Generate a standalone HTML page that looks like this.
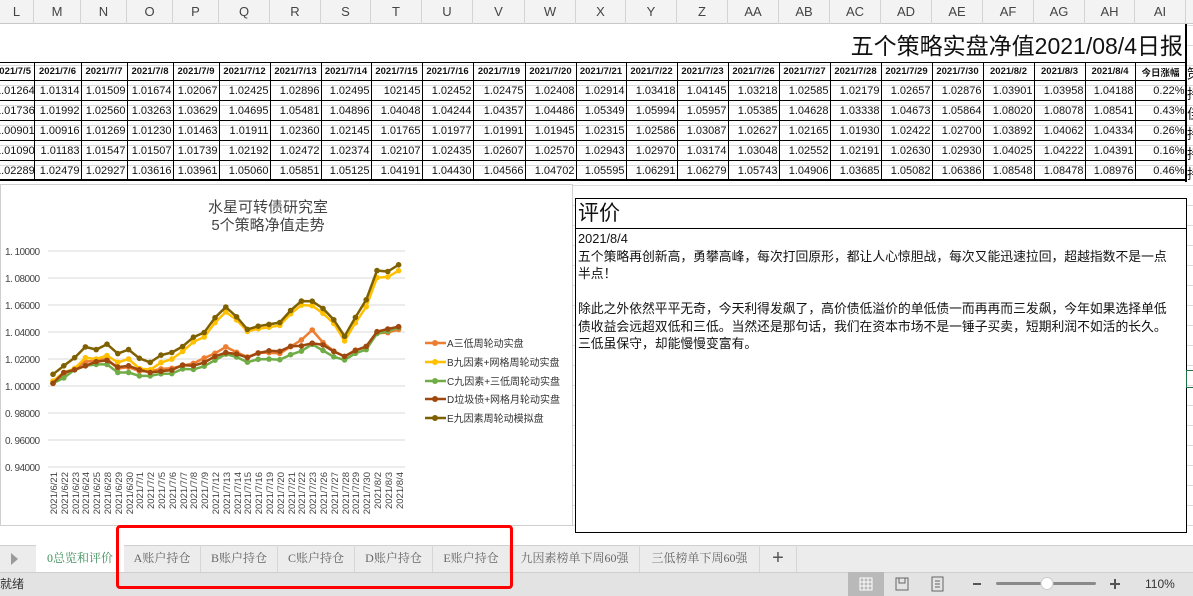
<!DOCTYPE html>
<html><head><meta charset="utf-8">
<style>
*{margin:0;padding:0;box-sizing:border-box}
body{width:1193px;height:596px;overflow:hidden;background:#fff;font-family:"Liberation Sans","Noto Sans CJK SC",sans-serif;position:relative}
.abs{position:absolute}
#hdr{left:0;top:0;width:1193px;height:24px;background:#f3f3f3;border-bottom:1px solid #c8c8c8}
#hdr div{position:absolute;top:0;height:24px;line-height:24px;text-align:center;font-size:13px;color:#444;border-right:1px solid #d4d4d4}
table{border-collapse:collapse;table-layout:fixed;position:absolute;left:0;top:62px;width:1186px}
td{border:1px solid #000;height:20px;font-size:11px;text-align:right;padding:0 1px;overflow:hidden;white-space:nowrap;color:#111}
tr.d td{font-weight:bold;font-size:9.5px;text-align:center;height:18px}
td:first-child{text-align:left!important;padding:0;text-indent:-5px;border-left:none}
tr.d td:first-child{text-indent:-6px}
#grid{left:0;top:24px;width:1193px;height:521px;background-image:linear-gradient(#dcdcdc 1px,transparent 1px);background-size:100% 20px;background-position:0 1px}
</style></head><body>
<div class="abs" id="grid"></div>
<div class="abs" style="left:0;top:24px;width:1186px;height:38px;background:#fff"></div>
<div class="abs" id="hdr">
<div style="left:0;width:34px">L</div><div style="left:34px;width:47px">M</div><div style="left:81px;width:46px">N</div><div style="left:127px;width:46px">O</div><div style="left:173px;width:46px">P</div><div style="left:219px;width:51px">Q</div><div style="left:270px;width:51px">R</div><div style="left:321px;width:50px">S</div><div style="left:371px;width:51px">T</div><div style="left:422px;width:51px">U</div><div style="left:473px;width:52px">V</div><div style="left:525px;width:51px">W</div><div style="left:576px;width:50px">X</div><div style="left:626px;width:51px">Y</div><div style="left:677px;width:51px">Z</div><div style="left:728px;width:51px">AA</div><div style="left:779px;width:51px">AB</div><div style="left:830px;width:51px">AC</div><div style="left:881px;width:51px">AD</div><div style="left:932px;width:51px">AE</div><div style="left:983px;width:51px">AF</div><div style="left:1034px;width:51px">AG</div><div style="left:1085px;width:50px">AH</div><div style="left:1135px;width:51px">AI</div>
</div>
<div class="abs" style="left:600px;top:29px;width:583px;text-align:right;font-size:23px;line-height:34px;color:#111">五个策略实盘净值2021/08/4日报</div>
<div class="abs" style="left:1185px;top:24px;width:2px;height:158px;background:#000"></div>
<div class="abs" style="left:1187px;top:64px;font-size:14px;line-height:20px;color:#111">策<br>持<br>佳<br>持<br>持<br>持</div>
<table>
<colgroup><col style="width:34px"><col style="width:47px"><col style="width:46px"><col style="width:46px"><col style="width:46px"><col style="width:51px"><col style="width:51px"><col style="width:50px"><col style="width:51px"><col style="width:51px"><col style="width:52px"><col style="width:51px"><col style="width:50px"><col style="width:51px"><col style="width:51px"><col style="width:51px"><col style="width:51px"><col style="width:51px"><col style="width:51px"><col style="width:51px"><col style="width:51px"><col style="width:51px"><col style="width:50px"><col style="width:51px"></colgroup>
<tr class="d"><td>2021/7/5</td><td>2021/7/6</td><td>2021/7/7</td><td>2021/7/8</td><td>2021/7/9</td><td>2021/7/12</td><td>2021/7/13</td><td>2021/7/14</td><td>2021/7/15</td><td>2021/7/16</td><td>2021/7/19</td><td>2021/7/20</td><td>2021/7/21</td><td>2021/7/22</td><td>2021/7/23</td><td>2021/7/26</td><td>2021/7/27</td><td>2021/7/28</td><td>2021/7/29</td><td>2021/7/30</td><td>2021/8/2</td><td>2021/8/3</td><td>2021/8/4</td><td>今日涨幅</td></tr>
<tr><td>1.01264</td><td>1.01314</td><td>1.01509</td><td>1.01674</td><td>1.02067</td><td>1.02425</td><td>1.02896</td><td>1.02495</td><td>102145</td><td>1.02452</td><td>1.02475</td><td>1.02408</td><td>1.02914</td><td>1.03418</td><td>1.04145</td><td>1.03218</td><td>1.02585</td><td>1.02179</td><td>1.02657</td><td>1.02876</td><td>1.03901</td><td>1.03958</td><td>1.04188</td><td>0.22%</td></tr>
<tr><td>1.01736</td><td>1.01992</td><td>1.02560</td><td>1.03263</td><td>1.03629</td><td>1.04695</td><td>1.05481</td><td>1.04896</td><td>1.04048</td><td>1.04244</td><td>1.04357</td><td>1.04486</td><td>1.05349</td><td>1.05994</td><td>1.05957</td><td>1.05385</td><td>1.04628</td><td>1.03338</td><td>1.04673</td><td>1.05864</td><td>1.08020</td><td>1.08078</td><td>1.08541</td><td>0.43%</td></tr>
<tr><td>1.00901</td><td>1.00916</td><td>1.01269</td><td>1.01230</td><td>1.01463</td><td>1.01911</td><td>1.02360</td><td>1.02145</td><td>1.01765</td><td>1.01977</td><td>1.01991</td><td>1.01945</td><td>1.02315</td><td>1.02586</td><td>1.03087</td><td>1.02627</td><td>1.02165</td><td>1.01930</td><td>1.02422</td><td>1.02700</td><td>1.03892</td><td>1.04062</td><td>1.04334</td><td>0.26%</td></tr>
<tr><td>1.01090</td><td>1.01183</td><td>1.01547</td><td>1.01507</td><td>1.01739</td><td>1.02192</td><td>1.02472</td><td>1.02374</td><td>1.02107</td><td>1.02435</td><td>1.02607</td><td>1.02570</td><td>1.02943</td><td>1.02970</td><td>1.03174</td><td>1.03048</td><td>1.02552</td><td>1.02191</td><td>1.02630</td><td>1.02930</td><td>1.04025</td><td>1.04222</td><td>1.04391</td><td>0.16%</td></tr>
<tr><td>1.02289</td><td>1.02479</td><td>1.02927</td><td>1.03616</td><td>1.03961</td><td>1.05060</td><td>1.05851</td><td>1.05125</td><td>1.04191</td><td>1.04430</td><td>1.04566</td><td>1.04702</td><td>1.05595</td><td>1.06291</td><td>1.06279</td><td>1.05743</td><td>1.04906</td><td>1.03685</td><td>1.05082</td><td>1.06386</td><td>1.08548</td><td>1.08478</td><td>1.08976</td><td>0.46%</td></tr>
</table>
<div class="abs" style="left:0;top:179px;width:1186px;height:2px;background:#000"></div>

<div class="abs" style="left:0;top:184px;width:573px;height:342px;background:#fff;border:1px solid #cfcfcf"></div>
<svg class="abs" style="left:0;top:0" width="1193" height="596">
<g font-family="Liberation Sans,Noto Sans CJK SC,sans-serif">
<text x="268" y="212" font-size="15" fill="#444" text-anchor="middle">水星可转债研究室</text>
<text x="268" y="230" font-size="15" fill="#444" text-anchor="middle">5个策略净值走势</text>
<g font-size="10" fill="#444">
<text x="5" y="255" textLength="35">1. 10000</text><text x="5" y="282" textLength="35">1. 08000</text><text x="5" y="309" textLength="35">1. 06000</text><text x="5" y="336" textLength="35">1. 04000</text><text x="5" y="363" textLength="35">1. 02000</text><text x="5" y="390" textLength="35">1. 00000</text><text x="5" y="417" textLength="35">0. 98000</text><text x="5" y="444" textLength="35">0. 96000</text><text x="5" y="471" textLength="35">0. 94000</text>
</g>
<g stroke="#d9d9d9" stroke-width="1">
<line x1="48" x2="405" y1="251" y2="251"/><line x1="48" x2="405" y1="278" y2="278"/><line x1="48" x2="405" y1="305" y2="305"/><line x1="48" x2="405" y1="332" y2="332"/><line x1="48" x2="405" y1="359" y2="359"/><line x1="48" x2="405" y1="386" y2="386"/><line x1="48" x2="405" y1="413" y2="413"/><line x1="48" x2="405" y1="440" y2="440"/><line x1="48" x2="405" y1="467" y2="467"/>
</g>
<g font-size="9.5" fill="#444" text-anchor="end">
<text transform="translate(57,472) rotate(-90)">2021/6/21</text><text transform="translate(68,472) rotate(-90)">2021/6/22</text><text transform="translate(79,472) rotate(-90)">2021/6/23</text><text transform="translate(89,472) rotate(-90)">2021/6/24</text><text transform="translate(100,472) rotate(-90)">2021/6/25</text><text transform="translate(111,472) rotate(-90)">2021/6/28</text><text transform="translate(122,472) rotate(-90)">2021/6/29</text><text transform="translate(133,472) rotate(-90)">2021/6/30</text><text transform="translate(143,472) rotate(-90)">2021/7/1</text><text transform="translate(154,472) rotate(-90)">2021/7/2</text><text transform="translate(165,472) rotate(-90)">2021/7/5</text><text transform="translate(176,472) rotate(-90)">2021/7/6</text><text transform="translate(187,472) rotate(-90)">2021/7/7</text><text transform="translate(197,472) rotate(-90)">2021/7/8</text><text transform="translate(208,472) rotate(-90)">2021/7/9</text><text transform="translate(219,472) rotate(-90)">2021/7/12</text><text transform="translate(230,472) rotate(-90)">2021/7/13</text><text transform="translate(241,472) rotate(-90)">2021/7/14</text><text transform="translate(251,472) rotate(-90)">2021/7/15</text><text transform="translate(262,472) rotate(-90)">2021/7/16</text><text transform="translate(273,472) rotate(-90)">2021/7/19</text><text transform="translate(284,472) rotate(-90)">2021/7/20</text><text transform="translate(295,472) rotate(-90)">2021/7/21</text><text transform="translate(305,472) rotate(-90)">2021/7/22</text><text transform="translate(316,472) rotate(-90)">2021/7/23</text><text transform="translate(327,472) rotate(-90)">2021/7/26</text><text transform="translate(338,472) rotate(-90)">2021/7/27</text><text transform="translate(349,472) rotate(-90)">2021/7/28</text><text transform="translate(359,472) rotate(-90)">2021/7/29</text><text transform="translate(370,472) rotate(-90)">2021/7/30</text><text transform="translate(381,472) rotate(-90)">2021/8/2</text><text transform="translate(392,472) rotate(-90)">2021/8/3</text><text transform="translate(403,472) rotate(-90)">2021/8/4</text>
</g>
<g id="series"></g>
<g font-size="10" fill="#333">
<line x1="425" x2="446" y1="343" y2="343" stroke="#ed7d31" stroke-width="2.5"/><circle cx="435" cy="343" r="3" fill="#ed7d31"/><text x="447" y="347">A三低周轮动实盘</text>
<line x1="425" x2="446" y1="362" y2="362" stroke="#ffc000" stroke-width="2.5"/><circle cx="435" cy="362" r="3" fill="#ffc000"/><text x="447" y="366">B九因素+网格周轮动实盘</text>
<line x1="425" x2="446" y1="381" y2="381" stroke="#70ad47" stroke-width="2.5"/><circle cx="435" cy="381" r="3" fill="#70ad47"/><text x="447" y="385">C九因素+三低周轮动实盘</text>
<line x1="425" x2="446" y1="399" y2="399" stroke="#9e480e" stroke-width="2.5"/><circle cx="435" cy="399" r="3" fill="#9e480e"/><text x="447" y="403">D垃圾债+网格月轮动实盘</text>
<line x1="425" x2="446" y1="418" y2="418" stroke="#7f6000" stroke-width="2.5"/><circle cx="435" cy="418" r="3" fill="#7f6000"/><text x="447" y="422">E九因素周轮动模拟盘</text>
</g>
</g>
</svg>

<div class="abs" style="left:575px;top:198px;width:612px;height:335px;background:#fff;border:1px solid #000"></div>
<div class="abs" style="left:575px;top:228px;width:612px;height:1px;background:#000"></div>
<div class="abs" style="left:578px;top:199px;font-size:21px;line-height:29px;color:#111">评价</div>
<div class="abs" style="left:578px;top:230px;width:610px;font-size:12.8px;line-height:17.5px;color:#111;white-space:nowrap">2021/8/4<br>五个策略再创新高，勇攀高峰，每次打回原形，都让人心惊胆战，每次又能迅速拉回，超越指数不是一点<br>半点！<br><br>除此之外依然平平无奇，今天利得发飙了，高价债低溢价的单低债一而再再而三发飙，今年如果选择单低<br>债收益会远超双低和三低。当然还是那句话，我们在资本市场不是一锤子买卖，短期利润不如活的长久。<br>三低虽保守，却能慢慢变富有。</div>
<div class="abs" style="left:1186px;top:370px;width:7px;height:18px;border:1px solid #1e7145;border-right:none"></div>

<div class="abs" style="left:0;top:545px;width:1193px;height:27px;background:#ececec;border-top:1px solid #d0d0d0"></div>
<div class="abs" style="left:11px;top:553px;width:0;height:0;border-left:7px solid #9a9a9a;border-top:6px solid transparent;border-bottom:6px solid transparent"></div>
<div class="abs" style="left:36px;top:545px;width:88px;height:27px;background:#fff;color:#3f8f5a;font-size:12px;line-height:27px;text-align:center;font-family:'Liberation Serif','Noto Serif CJK SC',serif">0总览和评价</div>
<div class="abs" style="top:545px;left:0;font-size:12px;line-height:27px;color:#666;font-family:'Liberation Serif','Noto Serif CJK SC',serif">
<span class="abs" style="left:124px;width:77px;text-align:center;border-right:1px solid #d6d6d6">A账户持仓</span>
<span class="abs" style="left:201px;width:77px;text-align:center;border-right:1px solid #d6d6d6">B账户持仓</span>
<span class="abs" style="left:278px;width:77px;text-align:center;border-right:1px solid #d6d6d6">C账户持仓</span>
<span class="abs" style="left:355px;width:78px;text-align:center;border-right:1px solid #d6d6d6">D账户持仓</span>
<span class="abs" style="left:433px;width:77px;text-align:center;border-right:1px solid #d6d6d6">E账户持仓</span>
<span class="abs" style="left:510px;width:130px;text-align:center;border-right:1px solid #d6d6d6">九因素榜单下周60强</span>
<span class="abs" style="left:640px;width:120px;text-align:center;border-right:1px solid #d6d6d6">三低榜单下周60强</span>
<span class="abs" style="left:760px;width:37px;text-align:center;border-right:1px solid #d6d6d6;font-size:20px;color:#555;font-family:'Liberation Sans',sans-serif">+</span>
</div>
<div class="abs" style="left:0;top:572px;width:1193px;height:24px;background:#e3e3e3;border-top:1px solid #cfcfcf"></div>
<div class="abs" style="left:0;top:572px;font-size:12px;line-height:24px;color:#333">就绪</div>
<div class="abs" style="left:848px;top:572px;width:36px;height:24px;background:#b9b9b9"></div>
<svg class="abs" style="left:848px;top:572px" width="345" height="24">
<g fill="none" stroke="#fff" stroke-width="1"><rect x="12" y="6" width="12" height="12"/><line x1="16" y1="6" x2="16" y2="18"/><line x1="20" y1="6" x2="20" y2="18"/><line x1="12" y1="10" x2="24" y2="10"/><line x1="12" y1="14" x2="24" y2="14"/></g>
<g fill="none" stroke="#666" stroke-width="1"><rect x="48" y="6" width="12" height="12"/><polyline points="51,6 51,11 57,11 57,6"/><rect x="84" y="5" width="11" height="14"/><line x1="87" y1="9" x2="92" y2="9"/><line x1="87" y1="12" x2="92" y2="12"/><line x1="87" y1="15" x2="92" y2="15"/></g>
<rect x="125" y="11" width="8" height="2" fill="#555"/>
<rect x="148" y="10" width="100" height="3" rx="1.5" fill="#8a8a8a"/>
<circle cx="199" cy="11.5" r="6" fill="#fff" stroke="#ccc"/>
<rect x="262" y="11" width="10" height="2" fill="#555"/><rect x="266" y="7" width="2" height="10" fill="#555"/>
<text x="297" y="16" font-size="12" fill="#333" font-family="Liberation Sans,sans-serif">110%</text>
</svg>
<div class="abs" style="left:116px;top:525px;width:397px;height:64px;border:3px solid #f00;border-radius:4px"></div>

<script>
var early={A:[1.002,1.009,1.013,1.018,1.019,1.020,1.013,1.014,1.011,1.011],
B:[1.0037,1.010,1.013,1.021,1.020,1.0225,1.0175,1.020,1.013,1.012],
C:[1.002,1.006,1.012,1.015,1.016,1.016,1.010,1.010,1.0075,1.0075],
D:[1.002,1.010,1.012,1.015,1.018,1.019,1.014,1.015,1.012,1.010],
E:[1.0087,1.015,1.021,1.029,1.027,1.031,1.024,1.027,1.0205,1.0175]};
var rows=document.querySelectorAll('table tr');var keys=['A','B','C','D','E'];
var cols={A:'#ed7d31',B:'#ffc000',C:'#70ad47',D:'#9e480e',E:'#7f6000'};
var g=document.getElementById('series');var h='';
keys.forEach(function(k,i){var tds=rows[i+1].querySelectorAll('td');var v=early[k].slice();
for(var j=0;j<23;j++){var t=parseFloat(tds[j].textContent);if(t>10)t=t/100000;v.push(t);}
var pts=v.map(function(x,j){return [53+j*10.8,251+(1.1-x)*1350]});
h+='<polyline fill="none" stroke="'+cols[k]+'" stroke-width="2.5" stroke-linejoin="round" points="'+pts.map(function(p){return p[0].toFixed(1)+','+p[1].toFixed(1)}).join(' ')+'"/>';
pts.forEach(function(p){h+='<circle cx="'+p[0].toFixed(1)+'" cy="'+p[1].toFixed(1)+'" r="2.8" fill="'+cols[k]+'"/>'});});
g.innerHTML=h;
</script>
</body></html>
